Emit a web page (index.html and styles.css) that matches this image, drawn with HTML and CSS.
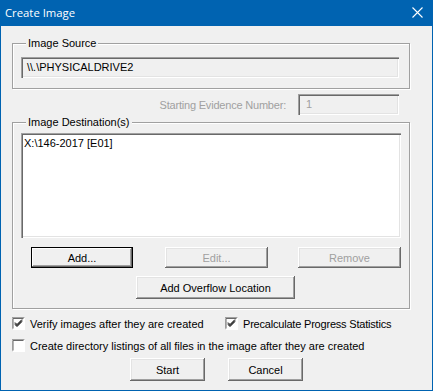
FILE: index.html
```html
<!DOCTYPE html>
<html>
<head>
  <title>Create Image</title>
  <meta charset="utf-8">
  <link rel="stylesheet" href="styles.css">
</head>
<body>
  <div class="jendela">
    <!-- Title bar -->
    <div class="judul">
      <span class="judul-teks">Create Image</span>
      <svg class="tutup" width="11" height="11" viewBox="0 0 11 11">
        <path d="M0.5 0.5 L10.5 10.5 M10.5 0.5 L0.5 10.5" stroke="#fff" stroke-width="1.1" fill="none"/>
      </svg>
    </div>

    <div class="isi">
      <!-- Image Source -->
      <div class="grup grup-sumber">
        <div class="label-grup">Image Source</div>
        <div class="kolom kolom-sumber">\\.\PHYSICALDRIVE2</div>
      </div>

      <div class="baris-nomor">
        <span class="mati">Starting Evidence Number:</span>
        <div class="kolom kolom-nomor mati">1</div>
      </div>

      <!-- Image Destination -->
      <div class="grup grup-tujuan">
        <div class="label-grup">Image Destination(s)</div>
        <div class="daftar">X:\146-2017 [E01]</div>
        <div class="baris-tombol">
          <button class="tombol tombol-utama t-add">Add...</button>
          <button class="tombol mati t-edit">Edit...</button>
          <button class="tombol mati t-remove">Remove</button>
        </div>
        <div class="baris-overflow">
          <button class="tombol t-overflow">Add Overflow Location</button>
        </div>
      </div>

      <div class="baris-cek baris-cek-1">
        <label class="cek cek-verify">
          <svg class="kotak" width="13" height="13" viewBox="0 0 13 13">
            <rect x="0" y="0" width="13" height="13" fill="#fff"/>
            <path d="M0 12.5 V0.5 H12.5" stroke="#a0a0a0" fill="none"/>
            <path d="M1 11.5 V1.5 H11.5" stroke="#696969" fill="none"/>
            <path d="M3 5.5 L5 7.5 L10 2.5 M3 6.5 L5 8.5 L10 3.5 M3 7.5 L5 9.5 L10 4.5" stroke="#000" fill="none"/>
          </svg>
          <span>Verify images after they are created</span>
        </label>
        <label class="cek cek-precalc">
          <svg class="kotak" width="13" height="13" viewBox="0 0 13 13">
            <rect x="0" y="0" width="13" height="13" fill="#fff"/>
            <path d="M0 12.5 V0.5 H12.5" stroke="#a0a0a0" fill="none"/>
            <path d="M1 11.5 V1.5 H11.5" stroke="#696969" fill="none"/>
            <path d="M3 5.5 L5 7.5 L10 2.5 M3 6.5 L5 8.5 L10 3.5 M3 7.5 L5 9.5 L10 4.5" stroke="#000" fill="none"/>
          </svg>
          <span class="sempit">Precalculate Progress Statistics</span>
        </label>
      </div>

      <div class="baris-cek baris-cek-2">
        <label class="cek">
          <svg class="kotak" width="13" height="13" viewBox="0 0 13 13">
            <rect x="0" y="0" width="13" height="13" fill="#fff"/>
            <path d="M0 12.5 V0.5 H12.5" stroke="#a0a0a0" fill="none"/>
            <path d="M1 11.5 V1.5 H11.5" stroke="#696969" fill="none"/>
          </svg>
          <span>Create directory listings of all files in the image after they are created</span>
        </label>
      </div>

      <div class="baris-aksi">
        <button class="tombol t-aksi">Start</button>
        <button class="tombol t-aksi t-cancel">Cancel</button>
      </div>
    </div>
  </div>
</body>
</html>
```

FILE: styles.css
```css
body {
  margin: 0;
  padding: 0;
  background: #f0f0f0;
  font-family: 'Liberation Sans', Arial, sans-serif;
  font-size: 11px;
  color: #000;
}
.jendela {
  width: 433px;
  height: 391px;
  box-sizing: border-box;
  border: 1px solid #0063b1;
  border-top: none;
  background: #f0f0f0;
}
.judul {
  height: 26px;
  margin: 0 -1px;
  background: #0063b1;
  display: flex;
  align-items: center;
  justify-content: space-between;
  padding: 0 10px 0 5px;
}
.judul-teks {
  font-family: 'Open Sans', 'Noto Sans', sans-serif;
  font-size: 11.3px;
  color: #fff;
  margin-top: -1px;
}
.tutup {
  display: block;
  margin-top: -1px;
}
.isi {
  padding-left: 11px;
}
.grup {
  width: 398px;
  box-sizing: border-box;
  border: 1px solid #a0a0a0;
  box-shadow: inset 1px 1px #fff, 1px 1px #fff;
}
.label-grup {
  display: table;
  height: 13px;
  line-height: 13px;
  margin: -7px 0 0 5px;
  padding: 0 2px;
  background: #f0f0f0;
}
.grup-sumber {
  margin-top: 17px;
  padding: 0 10px 10px 8px;
}
.kolom {
  box-sizing: border-box;
  height: 21px;
  line-height: 17px;
  padding: 2px 5px 0;
  background: #f0f0f0;
  box-shadow: inset 1px 1px #a0a0a0, inset 2px 2px #696969, inset -1px -1px #fff, inset -2px -2px #e3e3e3;
  white-space: nowrap;
}
.kolom-sumber {
  margin-top: 7px;
  width: 378px;
  padding-left: 6px;
}
.baris-nomor {
  width: 398px;
  box-sizing: border-box;
  padding-right: 11px;
  margin-top: 5px;
  display: flex;
  justify-content: flex-end;
  align-items: center;
}
.baris-nomor .mati {
  letter-spacing: -0.2px;
}
.kolom-nomor {
  width: 101px;
  margin-left: 12px;
  padding-left: 8px;
}
.mati {
  color: #a0a0a0;
}
.grup-tujuan {
  margin-top: 7px;
  padding: 0 0 9px 8px;
}
.daftar {
  margin-top: 4px;
  width: 380px;
  height: 105px;
  box-sizing: border-box;
  padding: 4px 3px;
  line-height: 13px;
  background: #fff;
  box-shadow: inset 1px 1px #a0a0a0, inset 2px 2px #696969, inset -1px -1px #fff, inset -2px -2px #e3e3e3;
}
.tombol {
  font-family: 'Liberation Sans', Arial, sans-serif;
  font-size: 11px;
  color: #000;
  background: #f0f0f0;
  border: none;
  margin: 0;
  padding: 0;
  height: 21px;
  box-sizing: border-box;
  box-shadow: inset -1px -1px #696969, inset 1px 1px #fff, inset -2px -2px #a0a0a0, inset 2px 2px #e3e3e3;
}
.tombol.mati {
  color: #a0a0a0;
}
.tombol-utama {
  box-shadow: inset 0 0 0 1px #000, inset -2px -2px #696969, inset 2px 2px #fff, inset -3px -3px #a0a0a0;
}
.baris-tombol {
  display: flex;
  margin-top: 9px;
}
.t-add {
  margin-left: 10px;
  width: 102px;
}
.t-edit {
  margin-left: 32px;
  width: 103px;
}
.t-remove {
  margin-left: 30px;
  width: 103px;
}
.baris-overflow {
  display: flex;
  margin-top: 8px;
  padding-left: 115px;
}
.t-overflow {
  width: 159px;
  height: 23px;
}
.baris-cek {
  display: flex;
  align-items: center;
  height: 13px;
}
.baris-cek-1 {
  margin-top: 8px;
}
.baris-cek-2 {
  margin-top: 9px;
}
.cek {
  display: flex;
  align-items: center;
}
.kotak {
  display: block;
  margin-right: 5px;
}
.cek-verify {
  width: 213px;
}
.sempit {
  letter-spacing: -0.2px;
}
.baris-aksi {
  display: flex;
  margin-top: 6px;
  padding-left: 118px;
}
.t-aksi {
  width: 75px;
  height: 23px;
}
.t-cancel {
  margin-left: 23px;
}
```
